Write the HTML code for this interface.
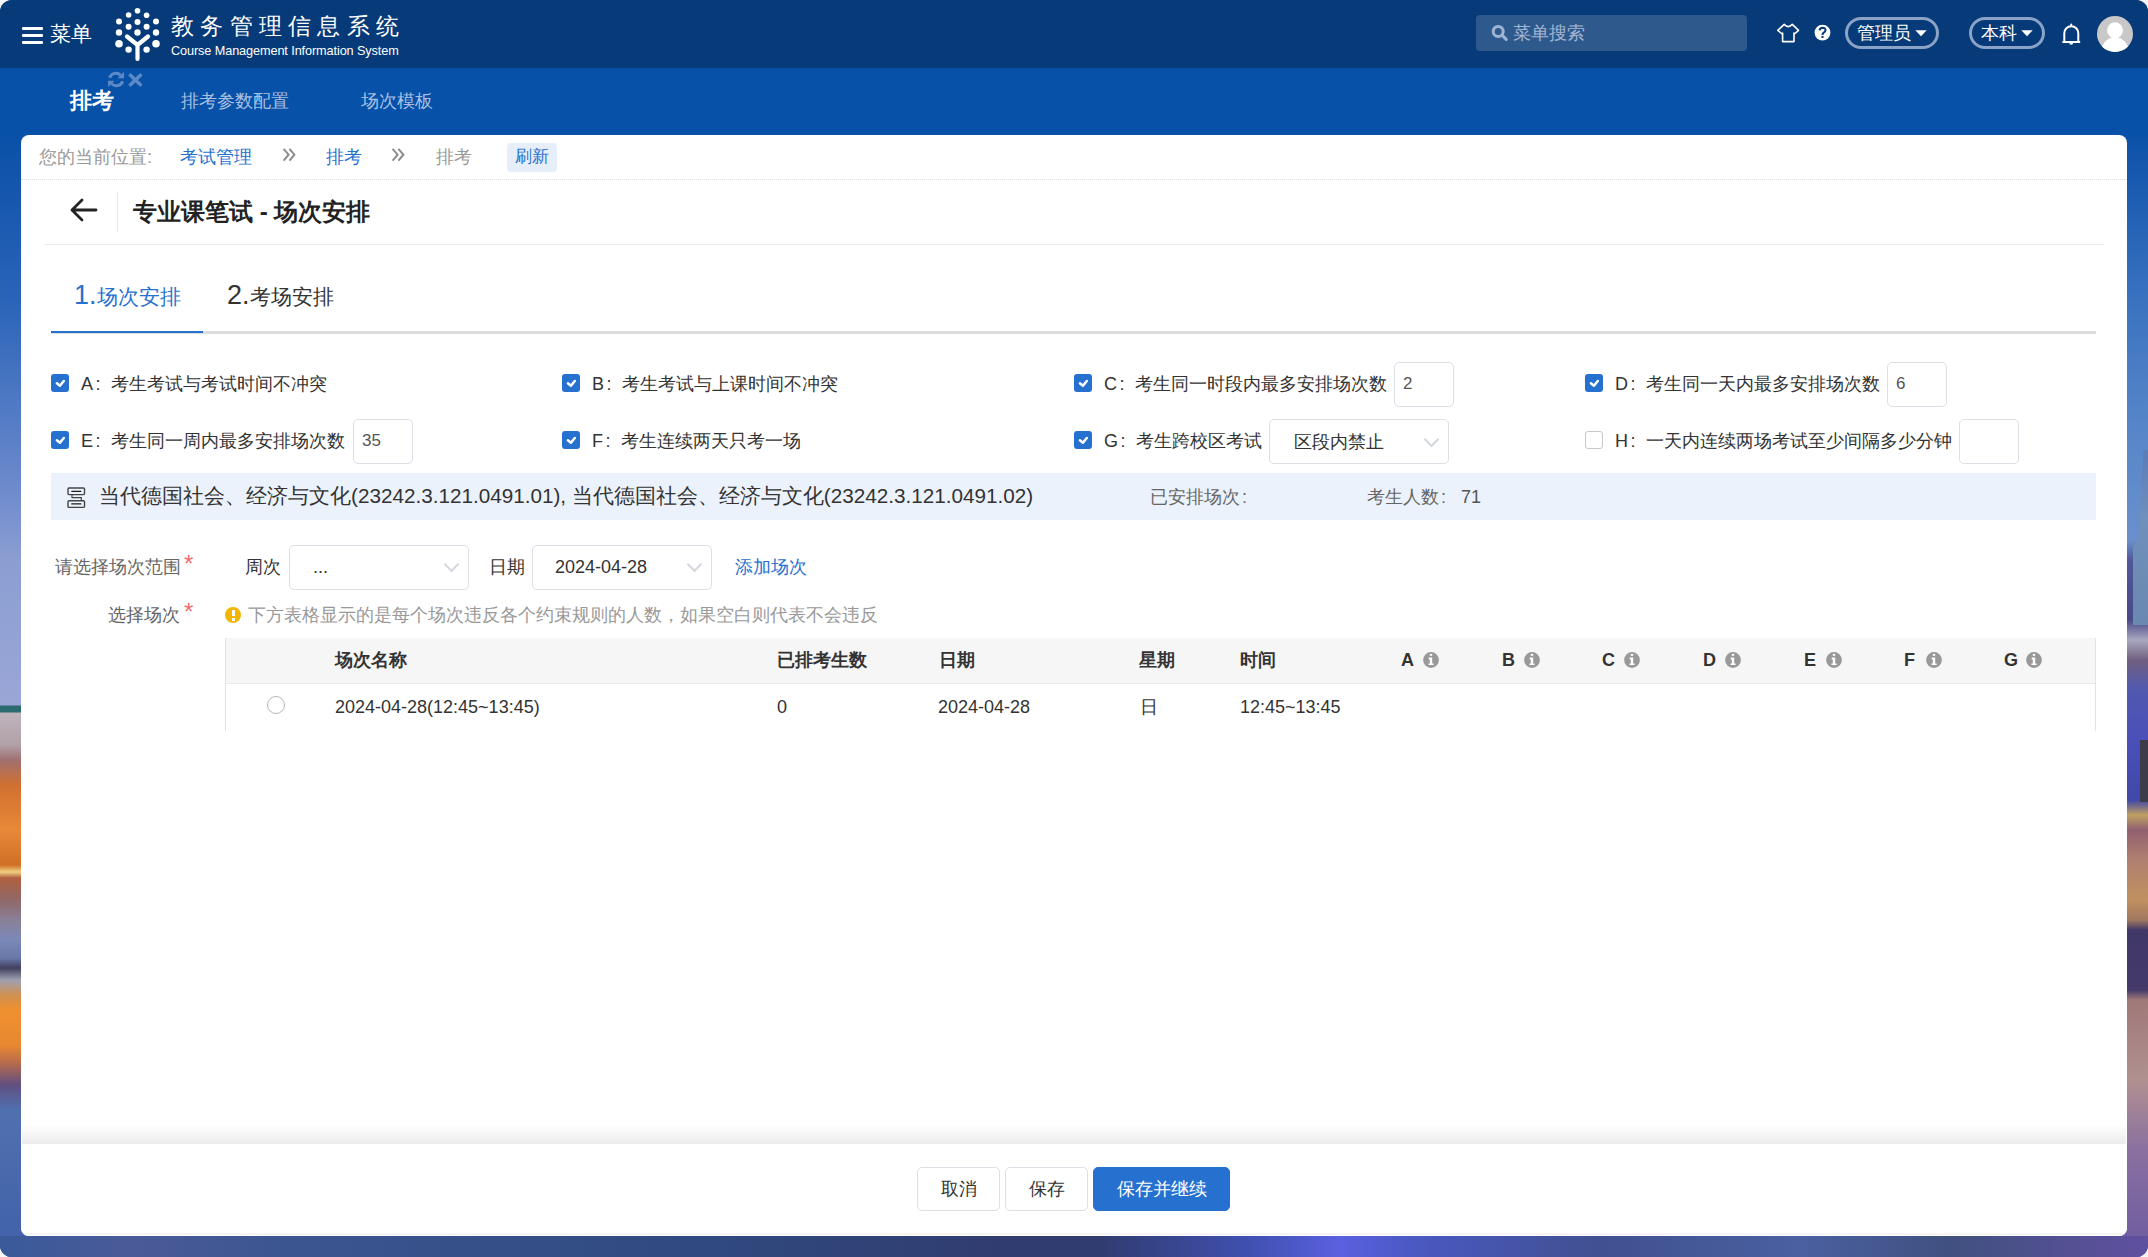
<!DOCTYPE html>
<html><head><meta charset="utf-8">
<style>
*{box-sizing:border-box;margin:0;padding:0}
html,body{width:2148px;height:1257px;overflow:hidden;background:#f6f6f6}
body{font-family:"Liberation Sans",sans-serif;position:relative}
.win{position:absolute;left:0;top:0;width:2148px;height:1257px;border-radius:12px;overflow:hidden;background:#0a4fa8}
.abs{position:absolute;white-space:nowrap}
.bgl{position:absolute;left:0;top:68px;width:30px;height:1189px;background:linear-gradient(180deg,#0751a8 0px,#0a50a8 67px,#2a64b8 232px,#6a88cc 412px,#8b9ed2 492px,#9aa6d6 637px,#2a6a70 638px,#2a6a70 644px,#c0b4bc 645px,#b0a0a8 677px,#a07070 692px,#d07030 717px,#e88838 762px,#d07028 797px,#f0d080 804px,#b06040 810px,#906868 832px,#8a8098 852px,#7a88b8 872px,#6a78a8 890px,#404060 900px,#a0a0b0 912px,#d09050 927px,#f09030 942px,#e88830 977px,#b06850 997px,#605080 1017px,#5070b0 1042px,#4060a8 1189px)}
.bgr{position:absolute;right:0;top:68px;width:30px;height:1189px;background:linear-gradient(180deg,#0a50a8 0px,#0a50a8 62px,#3a72c0 232px,#5585c8 352px,#6a90cc 472px,#505898 492px,#4a4888 552px,#a8a8c0 572px,#706080 592px,#5058b0 622px,#4a50b8 672px,#4048a8 732px,#c0a060 747px,#906070 762px,#b08070 792px,#c09060 832px,#a07860 852px,#403868 862px,#453a6a 922px,#a07878 932px,#b09090 1012px,#8a70a0 1082px,#6a5aa0 1189px)}
.bgb{position:absolute;left:0;top:1236px;width:2148px;height:21px;background:linear-gradient(90deg,#3a5a9a 0px,#4a5a98 130px,#3a5590 300px,#304a80 700px,#303c70 1000px,#303c70 1100px,#4050b0 1250px,#5a60e0 1340px,#4a58c0 1420px,#405090 1600px,#4a60a0 1800px,#405080 1950px,#6050a0 2148px)}
.top{position:absolute;left:0;top:0;width:2148px;height:68px;background:#073a78}
.tabbar{position:absolute;left:0;top:68px;width:2148px;height:67px;background:#0751a8}
.card{position:absolute;left:21px;top:135px;width:2106px;height:1101px;background:#fff;border-radius:8px}
.w{color:#fff}
.chk{position:absolute;width:18px;height:18px;border-radius:3px;background:#2671d0}
.chk svg{position:absolute;left:0;top:0}
.chk.off{background:#fff;border:1px solid #c8c8c8}
.lbl{position:absolute;font-size:18px;color:#333;white-space:nowrap;line-height:20px}
.inp{position:absolute;border:1px solid #dcdfe6;border-radius:5px;background:#fff;font-size:17px;color:#555}
.sel{position:absolute;border:1px solid #dcdfe6;border-radius:5px;background:#fff;font-size:17px;color:#333}
.caret{position:absolute;width:11px;height:11px;border-right:2px solid #d3d7de;border-bottom:2px solid #d3d7de;transform:rotate(45deg)}
.th{position:absolute;font-size:18px;font-weight:bold;color:#333;white-space:nowrap;line-height:20px}
.td{position:absolute;font-size:18px;color:#333;white-space:nowrap;line-height:20px}
.ic{position:absolute;width:16px;height:16px;border-radius:50%;background:#a8a8a8;color:#fff;font-size:12px;font-weight:bold;text-align:center;line-height:16px;font-family:"Liberation Serif",serif}
.btn{position:absolute;height:44px;border:1px solid #dcdfe6;border-radius:5px;background:#fff;font-size:18px;color:#333;text-align:center;line-height:42px}
</style></head><body>
<div class="win">
 <div class="bgl"></div><div class="bgr"></div><div class="bgb"></div>
 <div class="abs" style="left:2133px;top:450px;width:15px;height:175px;background:linear-gradient(180deg,#5a7cb8,#7090bc 40%,#6a88b0);clip-path:polygon(70% 0,100% 0,100% 100%,0 100%,0 55%,40% 50%,55% 20%)"></div>
 <div class="abs" style="left:2140px;top:740px;width:8px;height:62px;background:#3c3c4a"></div>
 <div class="top">
  <!-- hamburger -->
  <div class="abs" style="left:22px;top:26.5px;width:21px;height:3.4px;background:#fff;border-radius:1px"></div>
  <div class="abs" style="left:22px;top:33.5px;width:21px;height:3.4px;background:#fff;border-radius:1px"></div>
  <div class="abs" style="left:22px;top:40.5px;width:21px;height:3.4px;background:#fff;border-radius:1px"></div>
  <div class="abs w" style="left:50px;top:22px;font-size:21px;line-height:24px">菜单</div>
  <!-- logo -->
  <svg class="abs" style="left:110px;top:4px" width="56" height="60" viewBox="110 4 56 60">
   <g fill="#fff">
    <circle cx="137.5" cy="10.7" r="2.8"/>
    <circle cx="128.6" cy="15" r="2.8"/><circle cx="146.6" cy="15.2" r="2.8"/>
    <circle cx="119" cy="21.6" r="3"/><circle cx="137.5" cy="22" r="3"/><circle cx="156" cy="21.6" r="3"/>
    <circle cx="128.6" cy="26.8" r="3"/><circle cx="146.6" cy="26.8" r="3"/>
    <circle cx="119" cy="32.5" r="3.2"/><circle cx="137.5" cy="32.5" r="3.2"/><circle cx="156" cy="32.5" r="3.2"/>
    <circle cx="119" cy="43.7" r="3.8"/><circle cx="156" cy="43.7" r="3.8"/>
    <circle cx="128.6" cy="49.6" r="3.2"/><circle cx="146.6" cy="49.6" r="3.2"/>
   </g>
   <path d="M127 36.5 L137.5 45 L148 36.5 M137.5 44 L137.5 59" stroke="#fff" stroke-width="4.2" fill="none" stroke-linecap="round"/>
  </svg>
  <div class="abs w" style="left:171px;top:12px;font-size:23px;line-height:28px;letter-spacing:6.3px">教务管理信息系统</div>
  <div class="abs w" style="left:171px;top:44px;font-size:12.7px;line-height:15px;letter-spacing:-0.1px">Course Management Information System</div>
  <!-- search -->
  <div class="abs" style="left:1476px;top:15px;width:271px;height:36px;border-radius:4px;background:rgba(255,255,255,0.16)"></div>
  <svg class="abs" style="left:1491px;top:24px" width="18" height="18" viewBox="0 0 18 18"><circle cx="7.2" cy="7.4" r="5" stroke="#9fb3d2" stroke-width="3" fill="none"/><path d="M11.2 11.4 L15.2 15.4" stroke="#9fb3d2" stroke-width="3.2" stroke-linecap="round"/></svg>
  <div class="abs" style="left:1513px;top:21px;font-size:18px;line-height:24px;color:#a3b6d4">菜单搜索</div>
  <!-- shirt -->
  <svg class="abs" style="left:1770px;top:16px" width="34" height="32" viewBox="1770 16 34 32"><path d="M1784.2 24.3 Q1788.2 29 1792.3 24.3 L1798.6 30.3 L1794.4 34 L1794 33 L1794 41.6 L1782.6 41.6 L1782.6 33 L1782.1 34 L1777.8 30.3 Z" stroke="#fff" stroke-width="1.6" fill="none" stroke-linejoin="round"/></svg>
  <!-- help -->
  <svg class="abs" style="left:1810px;top:20px" width="26" height="26" viewBox="1810 20 26 26"><circle cx="1822.5" cy="32.6" r="7.9" fill="#fff"/><path d="M1819.6 30.4 Q1819.8 27.8 1822.6 27.8 Q1825.6 27.9 1825.5 30.3 Q1825.4 31.8 1823.8 32.6 Q1822.5 33.3 1822.5 35" stroke="#073a78" stroke-width="2.1" fill="none"/><rect x="1821.4" y="36" width="2.2" height="1.9" fill="#073a78"/></svg>
  <!-- admin pill -->
  <div class="abs" style="left:1845px;top:17px;width:94px;height:32px;border:3px solid #8aa3c6;border-radius:16px"></div>
  <div class="abs w" style="left:1857px;top:21px;font-size:18px;line-height:24px">管理员</div>
  <svg class="abs" style="left:1915px;top:30px" width="12" height="8" viewBox="0 0 12 8"><path d="M0.3 0.3 L11.7 0.3 L6 6.3 Z" fill="#fff"/></svg>
  <!-- benke pill -->
  <div class="abs" style="left:1969px;top:17px;width:76px;height:32px;border:3px solid #8aa3c6;border-radius:16px"></div>
  <div class="abs w" style="left:1981px;top:21px;font-size:18px;line-height:24px">本科</div>
  <svg class="abs" style="left:2021px;top:30px" width="12" height="8" viewBox="0 0 12 8"><path d="M0.3 0.3 L11.7 0.3 L6 6.3 Z" fill="#fff"/></svg>
  <!-- bell -->
  <svg class="abs" style="left:2058px;top:18px" width="26" height="30" viewBox="2058 18 26 30"><path d="M2064.3 41.5 V33.2 A7 7 0 0 1 2078.3 33.2 V41.5" stroke="#fff" stroke-width="2" fill="none"/><rect x="2062.4" y="41" width="17.8" height="2" fill="#fff"/><path d="M2069.2 42.8 A2 2 0 0 0 2073.2 42.8 Z" fill="#fff"/><rect x="2070.4" y="23.4" width="1.7" height="3.2" rx="0.8" fill="#fff"/></svg>
  <!-- avatar -->
  <svg class="abs" style="left:2094px;top:13px" width="42" height="42" viewBox="2094 13 42 42"><defs><clipPath id="avc"><circle cx="2115" cy="33.9" r="18"/></clipPath></defs><circle cx="2115" cy="33.9" r="18" fill="#c8c8c8"/><g clip-path="url(#avc)" fill="#fff"><circle cx="2115" cy="30.3" r="8"/><ellipse cx="2115" cy="55" rx="15" ry="17.8"/></g></svg>
 </div>
 <div class="tabbar">
  <div class="abs w" style="left:70px;top:20px;font-size:22px;font-weight:bold;line-height:26px">排考</div>
  <svg class="abs" style="left:100px;top:-2px" width="50" height="30" viewBox="100 66 50 30"><g fill="#5b8ac6" stroke="#5b8ac6"><path d="M109.6 77.8 A6.6 6.6 0 0 1 120.6 75.2" stroke-width="3" fill="none"/><path d="M124 71.8 L124 78.2 L117.6 78.2 Z" stroke="none"/><path d="M122.6 81.2 A6.6 6.6 0 0 1 111.6 83.8" stroke-width="3" fill="none"/><path d="M108.1 80.8 L114.5 80.8 L108.1 87.2 Z" stroke="none"/><path d="M130.6 75.4 L140.2 84.6 M140.2 75.4 L130.6 84.6" stroke-width="3.4" stroke-linecap="square" fill="none"/></g></svg>
  <div class="abs" style="left:181px;top:22px;font-size:18px;line-height:22px;color:#a9c0e2">排考参数配置</div>
  <div class="abs" style="left:361px;top:22px;font-size:18px;line-height:22px;color:#a9c0e2">场次模板</div>
 </div>
 <div class="card">
  <!-- breadcrumb -->
  <div class="abs" style="left:18px;top:11px;font-size:18px;line-height:22px;color:#999">您的当前位置:</div>
  <div class="abs" style="left:159px;top:11px;font-size:18px;line-height:22px;color:#2671d0">考试管理</div>
  <svg class="abs" style="left:261px;top:13px" width="14" height="14" viewBox="0 0 14 14"><path d="M1.6 0.8 L6.6 6.7 L1.6 12.6 M7.4 0.8 L12.4 6.7 L7.4 12.6" stroke="#8c8c8c" stroke-width="2" fill="none"/></svg>
  <div class="abs" style="left:305px;top:11px;font-size:18px;line-height:22px;color:#2671d0">排考</div>
  <svg class="abs" style="left:370px;top:13px" width="14" height="14" viewBox="0 0 14 14"><path d="M1.6 0.8 L6.6 6.7 L1.6 12.6 M7.4 0.8 L12.4 6.7 L7.4 12.6" stroke="#8c8c8c" stroke-width="2" fill="none"/></svg>
  <div class="abs" style="left:415px;top:11px;font-size:18px;line-height:22px;color:#999">排考</div>
  <div class="abs" style="left:486px;top:8px;width:50px;height:29px;border-radius:4px;background:#e6eefa;color:#2671d0;font-size:17px;line-height:28px;text-align:center">刷新</div>
  <div class="abs" style="left:0;top:44px;width:2106px;height:0;border-top:1px dotted #dedede"></div>
  <!-- title -->
  <svg class="abs" style="left:48px;top:62px" width="30" height="26" viewBox="0 0 30 26"><path d="M3 13 L27 13 M13 3 L3 13 L13 23" stroke="#222" stroke-width="2.8" fill="none" stroke-linecap="round" stroke-linejoin="round"/></svg>
  <div class="abs" style="left:96px;top:57px;width:1px;height:40px;background:#e8e8e8"></div>
  <div class="abs" style="left:112px;top:62px;font-size:24px;font-weight:bold;line-height:30px;color:#222">专业课笔试 - 场次安排</div>
  <div class="abs" style="left:23px;top:109px;width:2060px;height:1px;background:#e6ebf1"></div>
  <!-- steps -->
  <div class="abs" style="left:53px;top:143px;line-height:34px;color:#2671d0"><span style="font-size:27px">1.</span><span style="font-size:21px">场次安排</span></div>
  <div class="abs" style="left:206px;top:143px;line-height:34px;color:#333"><span style="font-size:27px">2.</span><span style="font-size:21px">考场安排</span></div>
  <div class="abs" style="left:30px;top:196px;width:2045px;height:3px;background:#dcdcdc"></div>
  <div class="abs" style="left:30px;top:196px;width:152px;height:1.5px;background:#2671d0"></div>
  <div class="chk" style="left:30px;top:239px"><svg width="18" height="18" viewBox="0 0 18 18"><path d="M5.9 9.3 L8.9 11.7 L12.8 7" stroke="#fff" stroke-width="2.5" fill="none" stroke-linecap="round" stroke-linejoin="round"/></svg></div><div class="lbl" style="left:60px;top:239px">A<span style="display:inline-block;width:18px;padding-left:2.5px">:</span>考生考试与考试时间不冲突</div><div class="chk" style="left:541px;top:239px"><svg width="18" height="18" viewBox="0 0 18 18"><path d="M5.9 9.3 L8.9 11.7 L12.8 7" stroke="#fff" stroke-width="2.5" fill="none" stroke-linecap="round" stroke-linejoin="round"/></svg></div><div class="lbl" style="left:571px;top:239px">B<span style="display:inline-block;width:18px;padding-left:2.5px">:</span>考生考试与上课时间不冲突</div><div class="chk" style="left:1053px;top:239px"><svg width="18" height="18" viewBox="0 0 18 18"><path d="M5.9 9.3 L8.9 11.7 L12.8 7" stroke="#fff" stroke-width="2.5" fill="none" stroke-linecap="round" stroke-linejoin="round"/></svg></div><div class="lbl" style="left:1083px;top:239px">C<span style="display:inline-block;width:18px;padding-left:2.5px">:</span>考生同一时段内最多安排场次数</div><div class="inp" style="left:1373px;top:227px;width:60px;height:45px"><span style="position:absolute;left:8px;top:10px;line-height:22px">2</span></div><div class="chk" style="left:1564px;top:239px"><svg width="18" height="18" viewBox="0 0 18 18"><path d="M5.9 9.3 L8.9 11.7 L12.8 7" stroke="#fff" stroke-width="2.5" fill="none" stroke-linecap="round" stroke-linejoin="round"/></svg></div><div class="lbl" style="left:1594px;top:239px">D<span style="display:inline-block;width:18px;padding-left:2.5px">:</span>考生同一天内最多安排场次数</div><div class="inp" style="left:1866px;top:227px;width:60px;height:45px"><span style="position:absolute;left:8px;top:10px;line-height:22px">6</span></div><div class="chk" style="left:30px;top:296px"><svg width="18" height="18" viewBox="0 0 18 18"><path d="M5.9 9.3 L8.9 11.7 L12.8 7" stroke="#fff" stroke-width="2.5" fill="none" stroke-linecap="round" stroke-linejoin="round"/></svg></div><div class="lbl" style="left:60px;top:296px">E<span style="display:inline-block;width:18px;padding-left:2.5px">:</span>考生同一周内最多安排场次数</div><div class="inp" style="left:332px;top:284px;width:60px;height:45px"><span style="position:absolute;left:8px;top:10px;line-height:22px">35</span></div><div class="chk" style="left:541px;top:296px"><svg width="18" height="18" viewBox="0 0 18 18"><path d="M5.9 9.3 L8.9 11.7 L12.8 7" stroke="#fff" stroke-width="2.5" fill="none" stroke-linecap="round" stroke-linejoin="round"/></svg></div><div class="lbl" style="left:571px;top:296px">F<span style="display:inline-block;width:18px;padding-left:2.5px">:</span>考生连续两天只考一场</div><div class="chk" style="left:1053px;top:296px"><svg width="18" height="18" viewBox="0 0 18 18"><path d="M5.9 9.3 L8.9 11.7 L12.8 7" stroke="#fff" stroke-width="2.5" fill="none" stroke-linecap="round" stroke-linejoin="round"/></svg></div><div class="lbl" style="left:1083px;top:296px">G<span style="display:inline-block;width:18px;padding-left:2.5px">:</span>考生跨校区考试</div><div class="sel" style="left:1248px;top:284px;width:180px;height:45px"><span style="position:absolute;left:24px;top:11px;line-height:22px;font-size:18px">区段内禁止</span><div class="caret" style="left:156px;top:13.5px"></div></div><div class="chk off" style="left:1564px;top:296px"></div><div class="lbl" style="left:1594px;top:296px">H<span style="display:inline-block;width:18px;padding-left:2.5px">:</span>一天内连续两场考试至少间隔多少分钟</div><div class="inp" style="left:1938px;top:284px;width:60px;height:45px"><span style="position:absolute;left:8px;top:10px;line-height:22px"></span></div><div class="abs" style="left:30px;top:338px;width:2045px;height:47px;background:#ebf2fc"></div>
  <svg class="abs" style="left:39px;top:345px" width="40" height="35" viewBox="60 480 40 35"><g stroke="#444" fill="none"><rect x="68" y="488" width="16.5" height="6.6" rx="1" stroke-width="1.4"/><path d="M71.8 491.3 H80.8" stroke="#1a1a1a" stroke-width="1.3" stroke-linecap="round"/><path d="M72 495 V497.6 H81.3 V500.5" stroke-width="1.2"/><rect x="68" y="500.8" width="16.5" height="6.6" rx="1" stroke-width="1.4"/><path d="M71.8 503.9 H80.8" stroke="#1a1a1a" stroke-width="1.3" stroke-linecap="round"/></g></svg>
  <div class="abs" style="left:78px;top:348px;font-size:20.7px;line-height:26px;color:#333">当代德国社会、经济与文化(23242.3.121.0491.01), 当代德国社会、经济与文化(23242.3.121.0491.02)</div>
  <div class="abs" style="left:1129px;top:351px;font-size:18px;line-height:22px;color:#666">已安排场次<span style="padding-left:2px">:</span></div>
  <div class="abs" style="left:1346px;top:351px;font-size:18px;line-height:22px;color:#666">考生人数<span style="padding-left:2px">:</span><span style="color:#555;padding-left:15px">71</span></div>
<div class="abs" style="left:34px;top:421px;font-size:18px;line-height:22px;color:#666">请选择场次范围</div>
  <div class="abs" style="left:163px;top:418px;font-size:24px;line-height:22px;color:#f56c6c">*</div>
  <div class="abs" style="left:224px;top:421px;font-size:18px;line-height:22px;color:#333">周次</div>
  <div class="sel" style="left:268px;top:410px;width:180px;height:45px"><span style="position:absolute;left:23px;top:10px;line-height:22px;font-size:18px">...</span><div class="caret" style="left:156px;top:13px"></div></div>
  <div class="abs" style="left:468px;top:421px;font-size:18px;line-height:22px;color:#333">日期</div>
  <div class="sel" style="left:511px;top:410px;width:180px;height:45px"><span style="position:absolute;left:22px;top:10px;line-height:22px;font-size:18px">2024-04-28</span><div class="caret" style="left:156px;top:13px"></div></div>
  <div class="abs" style="left:714px;top:421px;font-size:18px;line-height:22px;color:#2671d0">添加场次</div>
  <div class="abs" style="left:87px;top:469px;font-size:18px;line-height:22px;color:#666">选择场次</div>
  <div class="abs" style="left:163px;top:466px;font-size:24px;line-height:22px;color:#f56c6c">*</div>
  <div class="abs" style="left:204px;top:472px;width:16px;height:16px;border-radius:50%;background:#f2b600"></div>
  <div class="abs" style="left:211px;top:475px;width:2.5px;height:6px;background:#fff"></div>
  <div class="abs" style="left:211px;top:483px;width:2.5px;height:2.5px;background:#fff"></div>
  <div class="abs" style="left:227px;top:469px;font-size:18px;line-height:22px;color:#999">下方表格显示的是每个场次违反各个约束规则的人数，如果空白则代表不会违反</div>
<div class="abs" style="left:204px;top:503px;width:1871px;height:46px;background:#f6f6f6;border-bottom:1px solid #e6eaf0"></div>
  <div class="abs" style="left:204px;top:503px;width:1px;height:93px;background:#e2e2e2"></div>
  <div class="abs" style="left:2074px;top:503px;width:1px;height:93px;background:#e2e2e2"></div>
  <div class="abs" style="left:246px;top:561px;width:18px;height:18px;border-radius:50%;border:1px solid #b8b8b8;background:#fff"></div>
<div class="th" style="left:314px;top:515px">场次名称</div><div class="th" style="left:756px;top:515px">已排考生数</div><div class="th" style="left:918px;top:515px">日期</div><div class="th" style="left:1118px;top:515px">星期</div><div class="th" style="left:1219px;top:515px">时间</div><div class="th" style="left:1380px;top:515px">A</div><svg class="abs" style="left:1402px;top:516.8px" width="16" height="16" viewBox="0 0 16 16"><circle cx="8" cy="8" r="7.9" fill="#999"/><rect x="6.8" y="1.9" width="2.4" height="1.9" fill="#fff"/><path d="M5.7 5.6 H9.2 V11.4 H10.6 V13 H5.5 V11.4 H6.8 V7.6 H5.7 Z" fill="#fff"/></svg><div class="th" style="left:1481px;top:515px">B</div><svg class="abs" style="left:1503px;top:516.8px" width="16" height="16" viewBox="0 0 16 16"><circle cx="8" cy="8" r="7.9" fill="#999"/><rect x="6.8" y="1.9" width="2.4" height="1.9" fill="#fff"/><path d="M5.7 5.6 H9.2 V11.4 H10.6 V13 H5.5 V11.4 H6.8 V7.6 H5.7 Z" fill="#fff"/></svg><div class="th" style="left:1581px;top:515px">C</div><svg class="abs" style="left:1603px;top:516.8px" width="16" height="16" viewBox="0 0 16 16"><circle cx="8" cy="8" r="7.9" fill="#999"/><rect x="6.8" y="1.9" width="2.4" height="1.9" fill="#fff"/><path d="M5.7 5.6 H9.2 V11.4 H10.6 V13 H5.5 V11.4 H6.8 V7.6 H5.7 Z" fill="#fff"/></svg><div class="th" style="left:1682px;top:515px">D</div><svg class="abs" style="left:1704px;top:516.8px" width="16" height="16" viewBox="0 0 16 16"><circle cx="8" cy="8" r="7.9" fill="#999"/><rect x="6.8" y="1.9" width="2.4" height="1.9" fill="#fff"/><path d="M5.7 5.6 H9.2 V11.4 H10.6 V13 H5.5 V11.4 H6.8 V7.6 H5.7 Z" fill="#fff"/></svg><div class="th" style="left:1783px;top:515px">E</div><svg class="abs" style="left:1805px;top:516.8px" width="16" height="16" viewBox="0 0 16 16"><circle cx="8" cy="8" r="7.9" fill="#999"/><rect x="6.8" y="1.9" width="2.4" height="1.9" fill="#fff"/><path d="M5.7 5.6 H9.2 V11.4 H10.6 V13 H5.5 V11.4 H6.8 V7.6 H5.7 Z" fill="#fff"/></svg><div class="th" style="left:1883px;top:515px">F</div><svg class="abs" style="left:1905px;top:516.8px" width="16" height="16" viewBox="0 0 16 16"><circle cx="8" cy="8" r="7.9" fill="#999"/><rect x="6.8" y="1.9" width="2.4" height="1.9" fill="#fff"/><path d="M5.7 5.6 H9.2 V11.4 H10.6 V13 H5.5 V11.4 H6.8 V7.6 H5.7 Z" fill="#fff"/></svg><div class="th" style="left:1983px;top:515px">G</div><svg class="abs" style="left:2005px;top:516.8px" width="16" height="16" viewBox="0 0 16 16"><circle cx="8" cy="8" r="7.9" fill="#999"/><rect x="6.8" y="1.9" width="2.4" height="1.9" fill="#fff"/><path d="M5.7 5.6 H9.2 V11.4 H10.6 V13 H5.5 V11.4 H6.8 V7.6 H5.7 Z" fill="#fff"/></svg><div class="td" style="left:314px;top:562px">2024-04-28(12:45~13:45)</div><div class="td" style="left:756px;top:562px">0</div><div class="td" style="left:917px;top:562px">2024-04-28</div><div class="td" style="left:1119px;top:562px">日</div><div class="td" style="left:1219px;top:562px">12:45~13:45</div><div class="abs" style="left:1px;top:989px;width:2104px;height:20px;background:linear-gradient(180deg,rgba(0,0,0,0) 0%,rgba(0,0,0,0.075) 100%)"></div>
  <div class="abs" style="left:0;top:1009px;width:2106px;height:92px;background:#fff;border-radius:0 0 8px 8px"></div>
  <div class="abs" style="left:4px;top:1098px;width:2098px;height:2px;background:#f4f4f4"></div>
  <div class="btn" style="left:896px;top:1032px;width:83px">取消</div>
  <div class="btn" style="left:984px;top:1032px;width:83px">保存</div>
  <div class="btn" style="left:1072px;top:1032px;width:137px;background:#2671d0;border-color:#2671d0;color:#fff">保存并继续</div>

 </div>
</div>
</body></html>
